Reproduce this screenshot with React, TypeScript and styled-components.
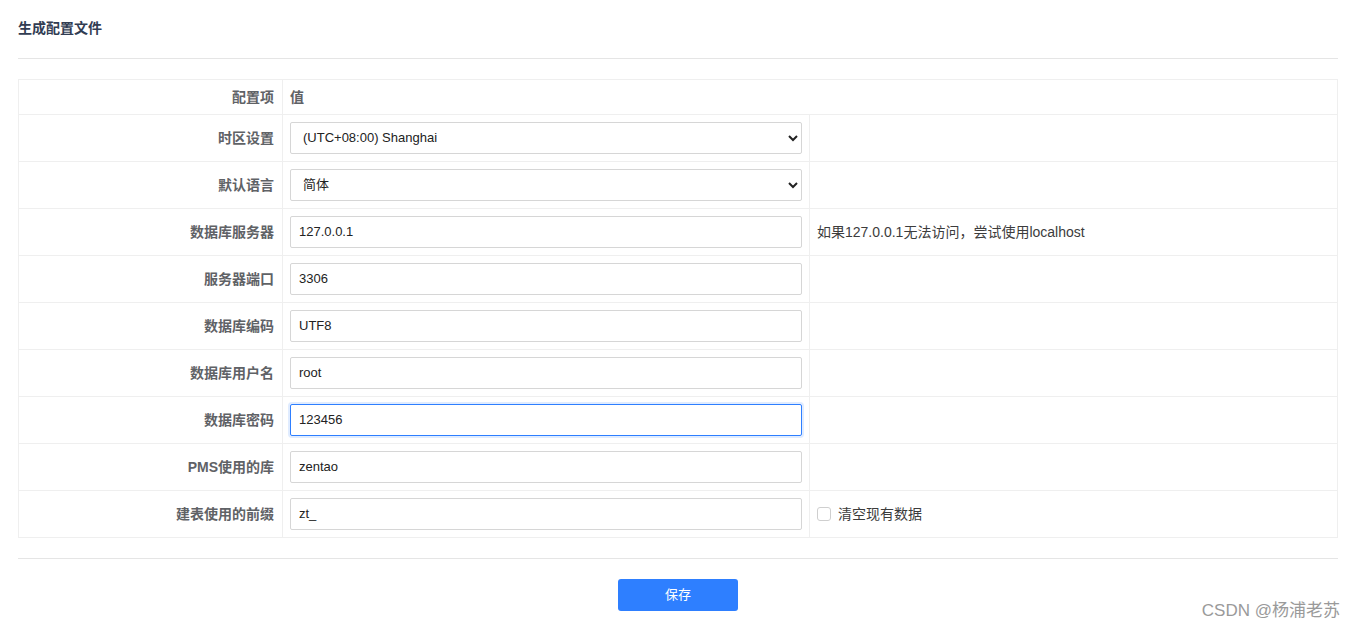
import React from 'react';
import styled, { createGlobalStyle } from 'styled-components';

const GlobalStyle = createGlobalStyle`
  body {
    margin: 0;
    background: #fff;
    font-family: "Liberation Sans", "Noto Sans CJK SC", sans-serif;
    font-size: 13px;
    color: #333;
  }
`;

const Page = styled.div`
  position: relative;
  height: 630px;
  padding: 0 18px;
  overflow: hidden;
`;

const PanelHeading = styled.div`
  height: 59px;
  box-sizing: border-box;
  border-bottom: 1px solid #e5e5e5;
  display: flex;
  align-items: center;
  padding-bottom: 4px;
  font-weight: bold;
  font-size: 14px;
  color: #313c52;
`;

const Table = styled.div`
  margin-top: 20px;
  display: grid;
  grid-template-columns: 264px 527px 1fr;
  border-top: 1px solid #efefef;
  border-left: 1px solid #efefef;
`;

const Cell = styled.div<{ $head?: boolean; $align?: 'right' | 'left'; $span?: number }>`
  box-sizing: border-box;
  height: ${p => (p.$head ? 35 : 47)}px;
  border-right: 1px solid #efefef;
  border-bottom: 1px solid #efefef;
  display: flex;
  align-items: center;
  justify-content: ${p => (p.$align === 'right' ? 'flex-end' : 'flex-start')};
  padding: 0 7px;
  grid-column: span ${p => p.$span || 1};
`;

const Label = styled.span`
  font-weight: bold;
  font-size: 14px;
  color: #5f6266;
  padding-right: 1px;
  margin-top: -3px;
`;

const Input = styled.input<{ $focused?: boolean }>`
  box-sizing: border-box;
  width: 100%;
  height: 32px;
  margin-bottom: 1px;
  padding: 0 8px;
  font: inherit;
  color: #222;
  border: 1px solid ${p => (p.$focused ? '#2e7fff' : '#d6d6d6')};
  border-radius: 2px;
  outline: none;
  box-shadow: ${p => (p.$focused ? '0 0 0 2px rgba(46, 127, 255, 0.15)' : 'none')};
`;

const Select = styled.select`
  box-sizing: border-box;
  width: 100%;
  height: 32px;
  margin-bottom: 1px;
  padding: 0 8px;
  font: inherit;
  color: #222;
  background: #fff;
  border: 1px solid #d6d6d6;
  border-radius: 2px;
  outline: none;
`;

const Hint = styled.span`
  font-size: 14px;
  color: #3c3c3c;
  margin-top: -2px;
`;

const CheckLabel = styled.label`
  display: flex;
  align-items: center;
  gap: 7px;
  font-size: 14px;
  color: #3c3c3c;
  margin-top: -2px;
`;

const CheckBox = styled.input`
  appearance: none;
  margin: 1px 0 0;
  width: 14px;
  height: 14px;
  box-sizing: border-box;
  border: 1px solid #cfcfcf;
  border-radius: 3px;
  background: #fff;
`;

const Divider = styled.div`
  margin-top: 20px;
  border-top: 1px solid #e5e5e5;
`;

const Actions = styled.div`
  display: flex;
  justify-content: center;
  padding-top: 20px;
`;

const SaveButton = styled.button`
  width: 120px;
  height: 32px;
  padding: 0 0 4px;
  border: none;
  border-radius: 3px;
  background: #2e7fff;
  color: #fff;
  font: inherit;
  cursor: pointer;
`;

const Watermark = styled.div`
  position: absolute;
  right: 16px;
  bottom: 9px;
  font-size: 17px;
  color: #9a9a9a;
`;

type Row = {
  label: string;
  value: string;
  kind?: 'select';
  options?: string[];
  focused?: boolean;
  extra?: React.ReactNode;
};

const rows: Row[] = [
  { label: '时区设置', value: '(UTC+08:00) Shanghai', kind: 'select', options: ['(UTC+08:00) Shanghai'] },
  { label: '默认语言', value: '简体', kind: 'select', options: ['简体', '繁體', 'English'] },
  { label: '数据库服务器', value: '127.0.0.1', extra: <Hint>如果127.0.0.1无法访问，尝试使用localhost</Hint> },
  { label: '服务器端口', value: '3306' },
  { label: '数据库编码', value: 'UTF8' },
  { label: '数据库用户名', value: 'root' },
  { label: '数据库密码', value: '123456', focused: true },
  { label: 'PMS使用的库', value: 'zentao' },
  {
    label: '建表使用的前缀',
    value: 'zt_',
    extra: (
      <CheckLabel>
        <CheckBox type="checkbox" />
        清空现有数据
      </CheckLabel>
    ),
  },
];

export default function App() {
  return (
    <Page>
      <GlobalStyle />
      <PanelHeading>生成配置文件</PanelHeading>
      <Table>
        <Cell $head $align="right">
          <Label>配置项</Label>
        </Cell>
        <Cell $head $span={2}>
          <Label>值</Label>
        </Cell>
        {rows.map(row => (
          <React.Fragment key={row.label}>
            <Cell $align="right">
              <Label>{row.label}</Label>
            </Cell>
            <Cell>
              {row.kind === 'select' ? (
                <Select defaultValue={row.value}>
                  {row.options?.map(o => (
                    <option key={o}>{o}</option>
                  ))}
                </Select>
              ) : (
                <Input type="text" defaultValue={row.value} $focused={row.focused} readOnly />
              )}
            </Cell>
            <Cell>{row.extra}</Cell>
          </React.Fragment>
        ))}
      </Table>
      <Divider />
      <Actions>
        <SaveButton type="button">保存</SaveButton>
      </Actions>
      <Watermark>CSDN @杨浦老苏</Watermark>
    </Page>
  );
}
